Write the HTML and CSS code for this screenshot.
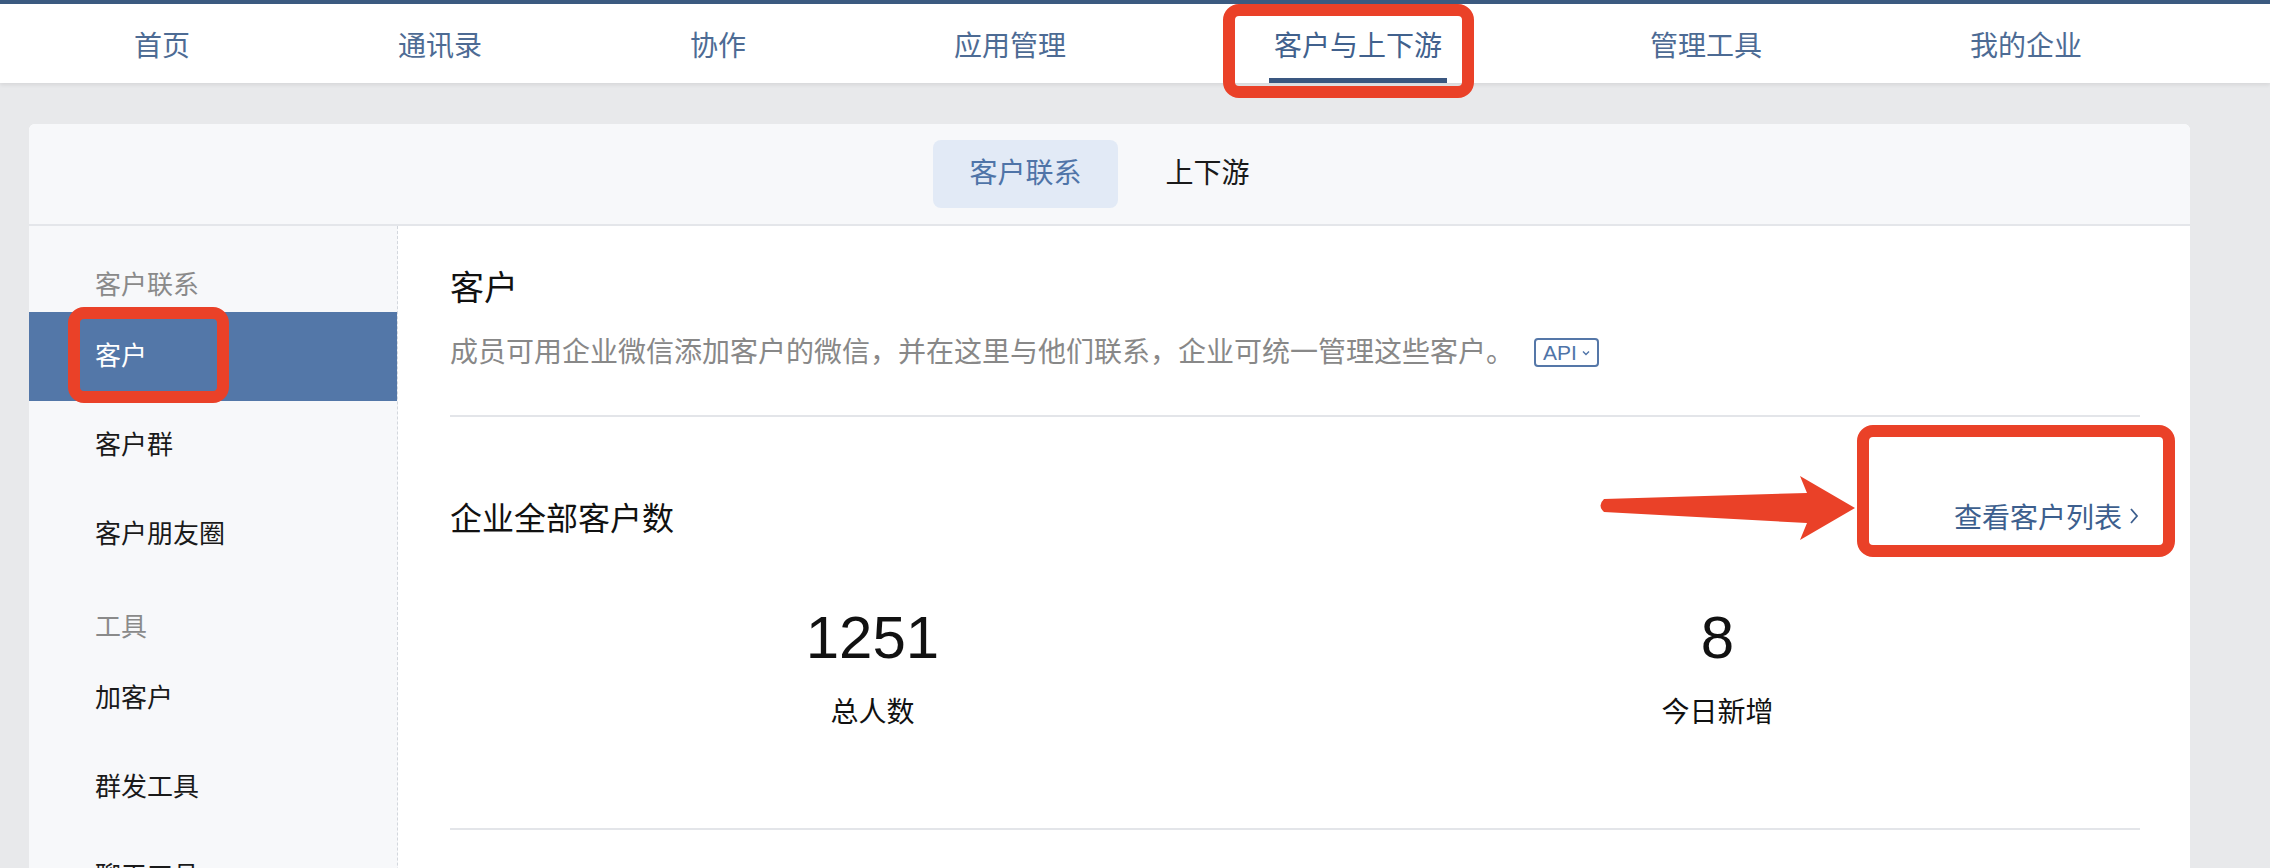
FILE: index.html
```html
<!DOCTYPE html>
<html lang="zh-CN">
<head>
<meta charset="utf-8">
<title>客户与上下游</title>
<link rel="stylesheet" href="styles.css">
</head>
<body>
<div class="page">
  <header class="topbar">
    <nav class="nav">
      <a class="nav-item">首页</a>
      <a class="nav-item">通讯录</a>
      <a class="nav-item">协作</a>
      <a class="nav-item">应用管理</a>
      <a class="nav-item active">客户与上下游</a>
      <a class="nav-item">管理工具</a>
      <a class="nav-item">我的企业</a>
    </nav>
  </header>

  <section class="card">
    <div class="tabs">
      <span class="tab active">客户联系</span>
      <span class="tab">上下游</span>
    </div>
    <div class="card-body">
      <aside class="sidebar">
        <div class="side-heading">客户联系</div>
        <div class="side-item active">客户</div>
        <div class="side-item">客户群</div>
        <div class="side-item">客户朋友圈</div>
        <div class="side-heading">工具</div>
        <div class="side-item">加客户</div>
        <div class="side-item">群发工具</div>
        <div class="side-item">聊天工具</div>
        <div class="side-item">客户联系配置</div>
      </aside>
      <main class="main">
        <h1 class="title">客户</h1>
        <p class="desc">成员可用企业微信添加客户的微信，并在这里与他们联系，企业可统一管理这些客户。<span class="api">API<svg class="api-caret" width="10" height="8" viewBox="0 0 10 8"><path d="M2 2.5 L5 5.5 L8 2.5" fill="none" stroke="#4f74a8" stroke-width="1.4"/></svg></span></p>
        <div class="section">
          <div class="section-head">
            <span class="section-title">企业全部客户数</span>
            <a class="link">查看客户列表<svg class="link-caret" width="12" height="20" viewBox="0 0 12 20"><path d="M3 3 L9 10 L3 17" fill="none" stroke="#3d5f8e" stroke-width="1.8"/></svg></a>
          </div>
          <div class="stats">
            <div class="stat">
              <div class="stat-num">1251</div>
              <div class="stat-label">总人数</div>
            </div>
            <div class="stat">
              <div class="stat-num">8</div>
              <div class="stat-label">今日新增</div>
            </div>
          </div>
        </div>
      </main>
    </div>
  </section>

  <div class="mark mark-nav"></div>
  <div class="mark mark-side"></div>
  <div class="mark mark-link"></div>
  <svg class="arrow" width="270" height="80" viewBox="1595 470 270 80">
    <path d="M1604 499 L1807 493 L1800 476 L1855 508 L1800 540 L1807 523 L1604 512 Q1597 505.5 1604 499 Z" fill="#ea4128"/>
  </svg>
</div>
</body>
</html>
```

FILE: styles.css
```css
* { box-sizing: border-box; }
html, body {
  margin: 0;
  padding: 0;
  height: 868px;
  overflow: hidden;
}
body {
  background: #e8e9eb;
  font-family: "Liberation Sans", "Noto Sans CJK SC", sans-serif;
  color: #1a1a1a;
}
.page {
  position: relative;
  width: 2270px;
  height: 868px;
  overflow: hidden;
}

/* top navigation */
.topbar {
  height: 83px;
  border-top: 4px solid #3b5a80;
  background: #fff;
  box-shadow: 0 2px 4px rgba(0, 0, 0, 0.08);
  position: relative;
  z-index: 1;
}
.nav {
  display: flex;
  gap: 198px;
  height: 100%;
  padding-left: 129px;
}
.nav-item {
  display: flex;
  align-items: center;
  padding: 0 5px;
  font-size: 28px;
  color: #4d6b94;
  cursor: pointer;
}
.nav-item.active {
  color: #41618d;
  box-shadow: inset 0 -5px 0 #3a5780;
}

/* card */
.card {
  margin: 41px 0 0 29px;
  width: 2161px;
  background: #fff;
  border-radius: 6px;
  overflow: hidden;
  height: 800px;
}
.tabs {
  height: 102px;
  background: #f7f8fa;
  border-bottom: 2px solid #e4e6ea;
  display: flex;
  justify-content: center;
  align-items: center;
  gap: 12px;
  padding-bottom: 1px;
}
.tab {
  height: 68px;
  line-height: 68px;
  padding: 0 36px;
  border-radius: 8px;
  font-size: 28px;
  color: #1a1a1a;
}
.tab.active {
  background: #e2eaf6;
  color: #4f74a8;
}
.card-body {
  display: flex;
  height: 100%;
}

/* sidebar */
.sidebar {
  width: 369px;
  flex: none;
  background: #f7f8fa;
  border-right: 1px dashed #d3d7dd;
  padding-top: 11px;
}
.side-heading {
  height: 75px;
  padding: 35px 0 0 66px;
  font-size: 26px;
  line-height: 26px;
  color: #8a8a8a;
}
.side-item {
  height: 89px;
  line-height: 89px;
  padding-left: 66px;
  font-size: 26px;
  color: #1a1a1a;
}
.side-item.active {
  background: #5377a8;
  color: #fff;
}

/* main */
.main {
  flex: 1;
  padding: 38px 50px 0 52px;
}
.title {
  margin: 0;
  font-size: 34px;
  line-height: 48px;
  font-weight: normal;
  color: #111;
}
.desc {
  margin: 21px 0 0;
  padding-bottom: 42px;
  border-bottom: 2px solid #e3e5e9;
  font-size: 28px;
  line-height: 40px;
  color: #888;
}
.api {
  display: inline-flex;
  align-items: center;
  gap: 4px;
  margin-left: 20px;
  height: 29px;
  padding: 0 6px 0 7px;
  border: 2px solid #5577a8;
  border-radius: 4px;
  font-size: 21px;
  line-height: 25px;
  color: #4f74a8;
  vertical-align: 2px;
}
.section {
  border-bottom: 2px solid #e3e5e9;
  padding-bottom: 95px;
}
.section-head {
  display: flex;
  justify-content: space-between;
  align-items: center;
  margin-top: 77px;
  height: 44px;
}
.section-title {
  font-size: 32px;
  color: #111;
}
.link {
  display: inline-flex;
  align-items: center;
  gap: 6px;
  font-size: 28px;
  color: #3d5f8e;
  cursor: pointer;
}
.stats {
  display: grid;
  grid-template-columns: 1fr 1fr;
  margin-top: 64px;
  text-align: center;
}
.stat-num {
  font-size: 60px;
  line-height: 72px;
  color: #111;
}
.stat-label {
  margin-top: 19px;
  font-size: 28px;
  line-height: 40px;
  color: #111;
}

/* red annotation overlays */
.mark {
  position: absolute;
  border: 12px solid #ea4128;
  border-radius: 16px;
  pointer-events: none;
  z-index: 5;
}
.mark-nav { left: 1223px; top: 4px; width: 251px; height: 94px; }
.mark-side { left: 68px; top: 307px; width: 161px; height: 96px; }
.mark-link { left: 1857px; top: 425px; width: 318px; height: 132px; }
.arrow {
  position: absolute;
  left: 1595px;
  top: 470px;
  z-index: 5;
}
```
